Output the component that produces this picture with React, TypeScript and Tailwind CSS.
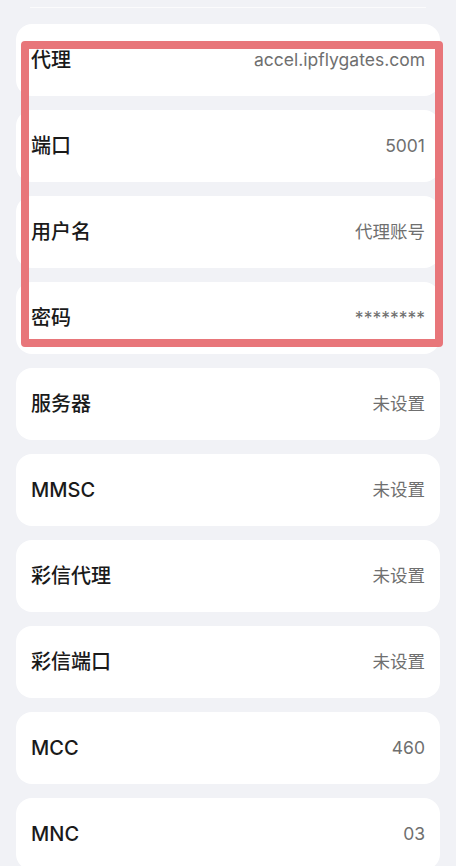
const rows: { label: string; value: string }[] = [
  { label: '代理', value: 'accel.ipflygates.com' },
  { label: '端口', value: '5001' },
  { label: '用户名', value: '代理账号' },
  { label: '密码', value: '********' },
  { label: '服务器', value: '未设置' },
  { label: 'MMSC', value: '未设置' },
  { label: '彩信代理', value: '未设置' },
  { label: '彩信端口', value: '未设置' },
  { label: 'MCC', value: '460' },
  { label: 'MNC', value: '03' },
];

function SettingRow({ label, value }: { label: string; value: string }) {
  return (
    <div className="flex h-[72px] items-center justify-between rounded-[16px] bg-white pl-[15px] pr-[15px]">
      <span className="text-[20px] font-medium text-[#1a1a1a]">{label}</span>
      <span className="text-[17.5px] text-[#6f6f6f]">{value}</span>
    </div>
  );
}

export default function App() {
  return (
    <div
      className="relative h-[866px] w-[456px] overflow-hidden bg-[#f1f2f6]"
      style={{ fontFamily: 'Inter, "Noto Sans CJK SC", "Noto Sans", sans-serif' }}
    >
      <div className="mx-[30px] mt-[7px] h-px bg-[#fbfbfc]" />
      <div className="mt-[16px] flex flex-col gap-[14px] px-[16px]">
        {rows.map((r) => (
          <SettingRow key={r.label} label={r.label} value={r.value} />
        ))}
      </div>
      {/* annotation box drawn over the proxy fields */}
      <div className="pointer-events-none absolute left-[21px] top-[41px] h-[306px] w-[422px] rounded-[4px] border-[8px] border-[#e8767a]" />
    </div>
  );
}
